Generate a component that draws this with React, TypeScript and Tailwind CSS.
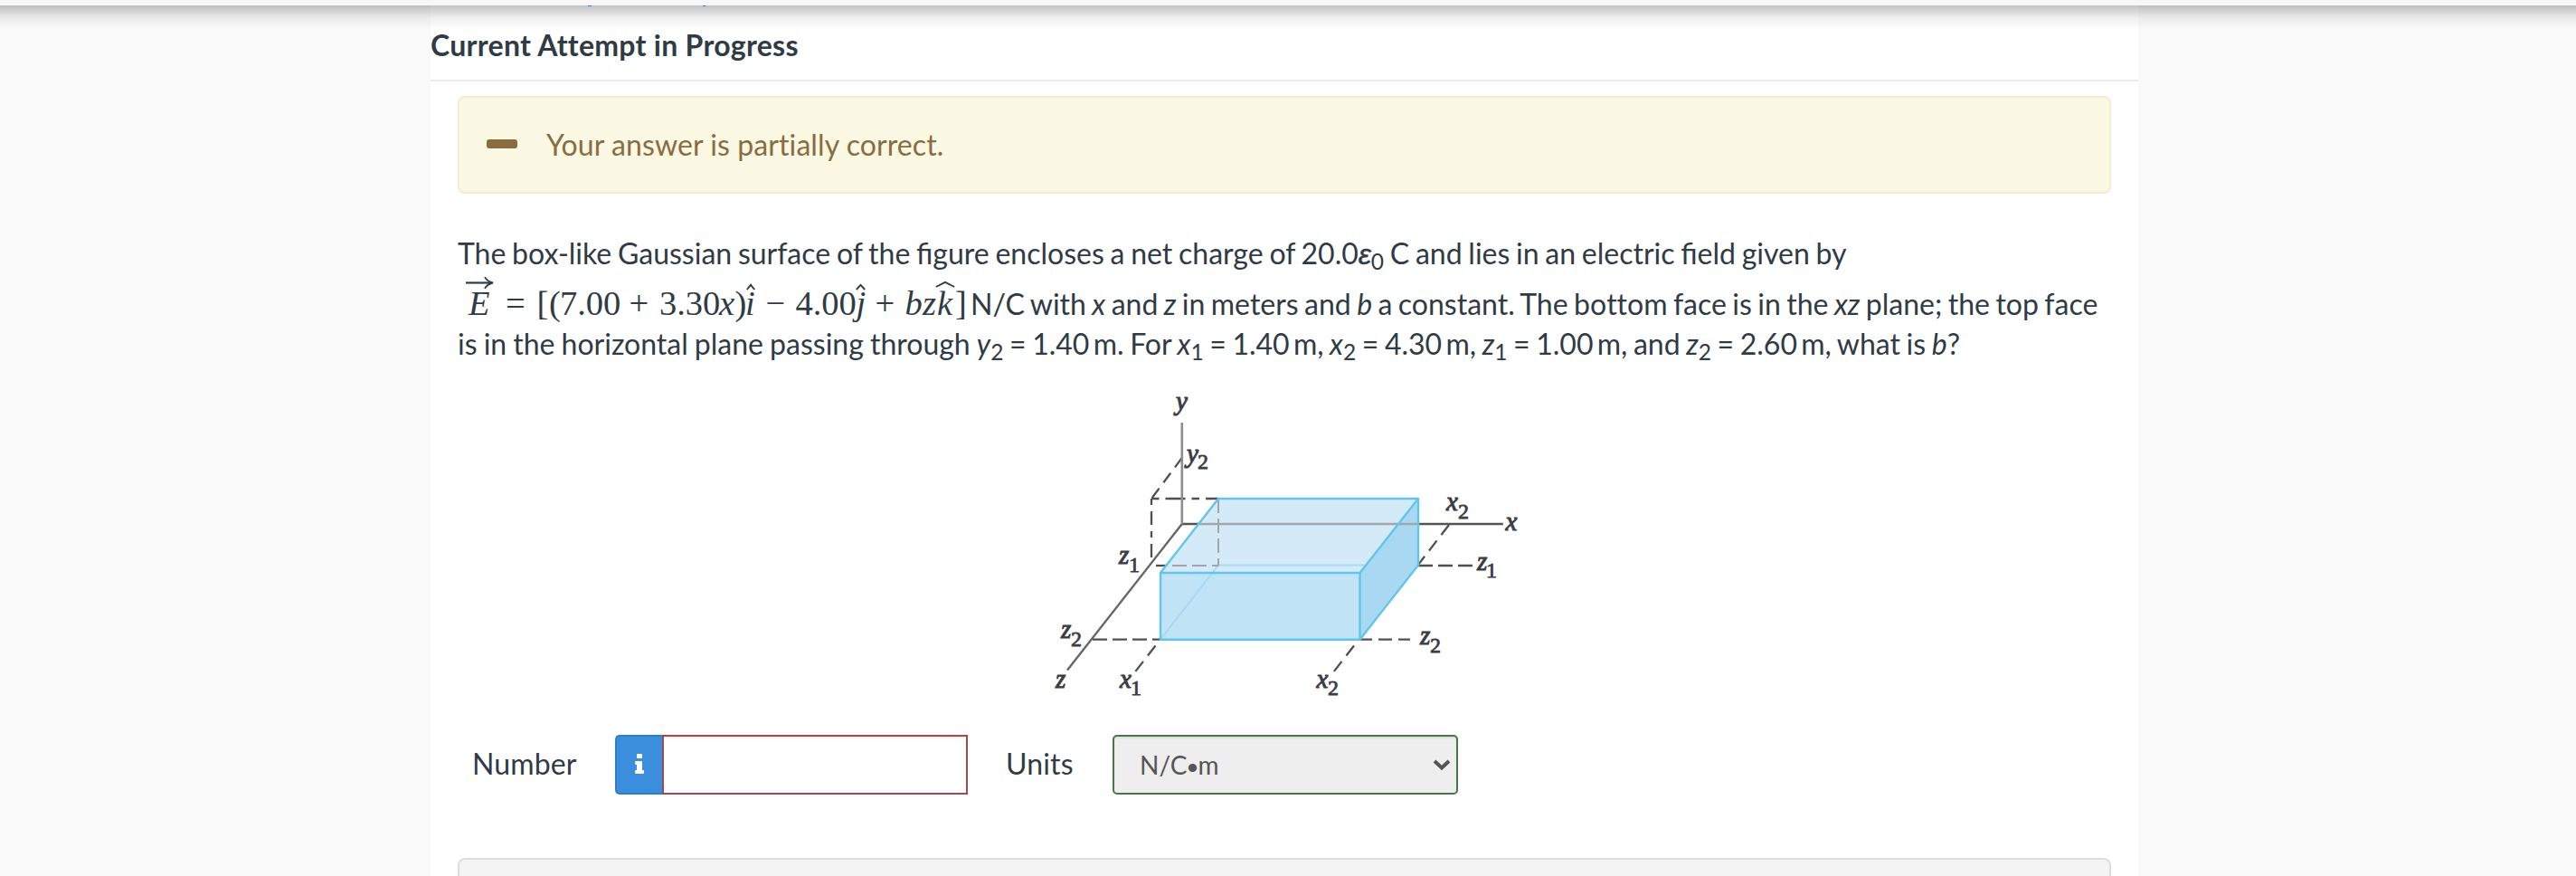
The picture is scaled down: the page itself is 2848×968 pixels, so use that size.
import React from "react";

const Sub = ({ children }: { children: React.ReactNode }) => (
  <span className="relative top-[6px] text-[24.5px] leading-none">{children}</span>
);

/* A number with its unit, set with a tight gap between them. */
const Qty = ({ children }: { children: React.ReactNode }) => <span className="[word-spacing:-3.9px]">{children}</span>;

const Atom = ({ w, italic, hat, children }: { w: string; italic?: boolean; hat?: React.ReactNode; children: React.ReactNode }) => (
  <span className={`relative inline-block shrink-0 whitespace-pre ${w} ${italic ? "italic" : ""}`}>
    {children}
    {hat}
  </span>
);

const Hat = ({ className, width = 10 }: { className: string; width?: number }) => (
  <svg className={`absolute ${className}`} width={width} height="8" viewBox={`0 0 ${width} 8`}>
    <path d={`M0.8 7 L${width / 2} 1.8 L${width - 0.8} 7`} fill="none" stroke="#2f3b45" strokeWidth="1.9" />
  </svg>
);

const Equation = () => (
  <span className="flex h-[56px] shrink-0 pl-[12px] font-['Liberation_Serif',serif] text-[38.5px] leading-[56px]">
    <Atom
      w="w-[41px]"
      italic
      hat={
        <svg className="absolute -left-[3px] top-[-2px]" width="31" height="15" viewBox="0 0 31 15">
          <path d="M0 7.5H28" fill="none" stroke="#2f3b45" strokeWidth="2.2" />
          <path d="M21 1.2Q23.5 6 30 7.5Q23.5 9 21 13.8" fill="none" stroke="#2f3b45" strokeWidth="1.8" />
        </svg>
      }
    >
      E
    </Atom>
    <Atom w="w-[34.6px]">=</Atom>
    <Atom w="w-[13.4px]">[</Atom>
    <Atom w="w-[12px]">(</Atom>
    <Atom w="w-[76.5px]">7.00</Atom>
    <Atom w="w-[33.5px]">+</Atom>
    <Atom w="w-[66px]">3.30</Atom>
    <Atom w="w-[17.5px]" italic>x</Atom>
    <Atom w="w-[11.5px]">)</Atom>
    <Atom w="w-[22.5px]" italic hat={<Hat className="left-[1px] top-[6px]" width={10} />}>i</Atom>
    <Atom w="w-[33px]">−</Atom>
    <Atom w="w-[67px]">4.00</Atom>
    <Atom w="w-[21px]" italic hat={<Hat className="left-[0px] top-[6px]" width={11} />}>j</Atom>
    <Atom w="w-[33px]">+</Atom>
    <Atom w="w-[19.5px]" italic>b</Atom>
    <Atom w="w-[16px]" italic>z</Atom>
    <Atom w="w-[20px]" italic hat={<Hat className="-left-[2px] top-[3px]" width={22} />}>k</Atom>
    <Atom w="w-[17px]">]</Atom>
  </span>
);

const Label = ({ x, y, c, sub, sx = 0, sy = 0 }: { x: number; y: number; c: string; sub?: string; sx?: number; sy?: number }) => (
  <g fill="#3c3c46" stroke="#3c3c46" strokeWidth="1">
    <text x={x} y={y} fontSize="29" fontStyle="italic">{c}</text>
    {sub && <text x={sx} y={sy} fontSize="24" strokeWidth="0.8">{sub}</text>}
  </g>
);

const Figure = () => (
  <svg width="560" height="360" viewBox="0 0 560 360" className="shrink-0 font-['Liberation_Serif',serif]">
    <g stroke="#555" strokeWidth="2.4" fill="none">
      <path d="M166.8 159H521.8" />
      <path d="M166.8 159L40 320.5" stroke="#666" />
    </g>
    <g stroke="#505050" strokeWidth="2.3" fill="none" strokeDasharray="16 6">
      <path d="M133 131H207" strokeDasharray="8.5 7 22 7" />
      <path d="M133 131V203" strokeDasharray="7 7 15 7" />
      <path d="M138 205H150" />
      <path d="M68 286.7H143" />
      <path d="M364 286.7H422" strokeDasharray="13 7 15 7" />
      <path d="M428 205H488" />
      <path d="M166.8 86L133 131" strokeDasharray="13 8" />
      <path d="M462 160L428 204" strokeDasharray="14 8" />
      <path d="M137.5 293.5L114.5 323" strokeDasharray="14 8" />
      <path d="M357 293.5L334 323" strokeDasharray="14 8" />
    </g>
    <path d="M207 131H428L363.5 213H143Z" fill="#d5eaf8" />
    <path d="M143 213H363.5V286.7H143Z" fill="#c0e3f6" />
    <path d="M428 131V204.5L363.5 286.7V213Z" fill="#a9d8f2" />
    <path d="M369 204.5H207L143 286.7" fill="none" stroke="#a6daf2" strokeWidth="2" />
    <g stroke="#a3a5aa" strokeWidth="2" fill="none">
      <path d="M185 159H428" strokeWidth="2.4" />
      <path d="M207 131V205.5" strokeDasharray="16 6" />
      <path d="M156 205H207" strokeDasharray="16 6" />
    </g>
    <path d="M166.8 47V159" stroke="#8e8e8e" strokeWidth="2.6" />
    <g stroke="#62c6eb" strokeWidth="2.4" fill="none" strokeLinejoin="round">
      <path d="M207 131H428V204.5L363.5 286.7H143V213Z" />
      <path d="M143 213H363.5L428 131M363.5 213V286.7" />
    </g>
    <Label x={160} y={33} c="y" />
    <Label x={172} y={91} c="y" sub="2" sx={184} sy={98} />
    <Label x={459} y={144} c="x" sub="2" sx={472} sy={153} />
    <Label x={524.5} y={165.5} c="x" />
    <Label x={97} y={203} c="z" sub="1" sx={108} sy={212} />
    <Label x={33} y={285} c="z" sub="2" sx={44} sy={294} />
    <Label x={27} y={339.5} c="z" />
    <Label x={98} y={339.5} c="x" sub="1" sx={110} sy={348} />
    <Label x={315.5} y={339.5} c="x" sub="2" sx={328} sy={348} />
    <Label x={430} y={291.5} c="z" sub="2" sx={441} sy={300.5} />
    <Label x={493} y={209.5} c="z" sub="1" sx={503} sy={218} />
  </svg>
);

export default function App() {
  return (
    <div className="flex h-[968px] w-[2848px] flex-col overflow-hidden bg-[#fafafa] font-[Lato,sans-serif] text-[32px] text-[#2f3b45]">
      <header className="relative h-[6px] shrink-0 bg-[#f7f7f7]">
        <div className="absolute inset-x-0 top-[6px] h-[26px] bg-linear-to-b from-black/24 via-black/7 to-transparent" />
        <div className="absolute left-[650px] top-[6px] h-[1px] w-[4px] bg-[#3c7fb5]" />
        <div className="absolute left-[777px] top-[6px] h-[1px] w-[3px] bg-[#3c7fb5]" />
      </header>
      <main className="ml-[476px] flex h-[962px] w-[1888px] flex-col bg-white">
        <h1 className="h-[84px] shrink-0 border-b-2 border-[#ebebeb] pt-[4px] font-bold leading-[80px] tracking-[0.28px] [font-variant-ligatures:none]">
          Current Attempt in Progress
        </h1>
        <section className="flex flex-col px-[30px] pt-[16px]">
          <div className="flex h-[108px] items-center rounded-[8px] border-2 border-[#f8ebcf] bg-[#fbf8e4] pl-[30px] text-[#8a6d3f]">
            <div className="mb-[2px] h-[10px] w-[34px] rounded-[3px] bg-[#8a6d3f]" />
            <p className="ml-[32px] leading-[40px] tracking-[0.09px] [font-variant-ligatures:none]">Your answer is partially correct.</p>
          </div>
          <div className="mt-[43px] whitespace-pre">
            <p className="h-[50px] leading-[46px] [word-spacing:-1.45px]">
              The box-like Gaussian surface of the figure encloses a net charge of 20.0<i className="font-['Liberation_Sans'] leading-none [-webkit-text-stroke:0.5px_#2f3b45]">ε</i><Sub>0</Sub> C and lies in an electric field given by
            </p>
            <div className="flex h-[51px]">
              <Equation />
              <p className="leading-[57px] [word-spacing:-1.75px]">
                N/C with <i>x</i> and <i>z</i> in meters and <i>b</i> a constant. The bo<span className="[font-variant-ligatures:none]">tt</span>om face is in the <i>xz</i> plane; the top face
              </p>
            </div>
            <p className="h-[44px] leading-[44px] [word-spacing:-1.6px]">
              <span className="[word-spacing:-1.1px]">is in the horizontal plane passing through </span><i>y</i><Sub>2</Sub> = <Qty>1.40 m</Qty>. For <i>x</i><Sub>1</Sub> = <Qty>1.40 m</Qty>, <i>x</i><Sub>2</Sub> = <Qty>4.30 m</Qty>, <i>z</i><Sub>1</Sub> = <Qty>1.00 m</Qty>, and <i>z</i><Sub>2</Sub> = <Qty>2.60 m</Qty>, what is <i>b</i>?
            </p>
          </div>
          <div className="mt-[18px] flex h-[360px] pl-[634px]">
            <Figure />
          </div>
          <div className="mt-[32px] flex h-[66px] items-center">
            <label className="w-[174px] pb-[2px] pl-[16px] tracking-[0.15px]">Number</label>
            <button className="flex h-[66px] w-[52px] items-center justify-center rounded-l-[5px] border-2 border-r-0 border-[#2f7fc7] bg-[#3a8edc]">
              <svg width="10" height="22" viewBox="0 0 10 22" className="mb-[3px]" fill="#fff">
                <rect x="2" y="0" width="6" height="5" rx="1" />
                <path d="M1 8H7.2Q8 8 8 9V18H9Q10 18 10 19V21Q10 22 9 22H1Q0 22 0 21V19Q0 18 1 18H2V12H1Q0 12 0 11V9Q0 8 1 8Z" />
              </svg>
            </button>
            <input className="h-[66px] w-[338px] border-2 border-[#a34a4a] bg-white shadow-[inset_0_2px_2px_rgba(0,0,0,0.07)] outline-none" />
            <label className="w-[160px] pb-[2px] pl-[42px] tracking-[0.15px]">Units</label>
            <div className="flex h-[66px] w-[382px] items-center justify-between rounded-[5px] border-2 border-[#487746] bg-[#eee] pl-[28px] pr-[6px] text-[28px] text-[#555] shadow-[inset_0_2px_2px_rgba(0,0,0,0.07)]">
              <span className="leading-[40px]">N/C<span className="relative top-[4px] font-['Liberation_Sans'] text-[34px] leading-none">•</span>m</span>
              <svg width="20" height="13" viewBox="0 0 20 13" fill="none" stroke="#555" strokeWidth="4">
                <path d="M2 2L10 9.5L18 2" />
              </svg>
            </div>
          </div>
          <div className="mt-[70px] h-[60px] rounded-t-[8px] border-2 border-[#ddd] bg-[#f4f4f4]" />
        </section>
      </main>
    </div>
  );
}
